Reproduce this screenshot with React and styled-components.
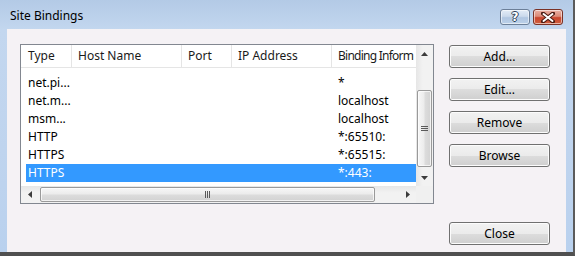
import React from "react";
import styled, { createGlobalStyle } from "styled-components";

const Global = createGlobalStyle`
  html, body { margin: 0; padding: 0; background: #ffffff; }
  body { font-family: "Noto Sans", "Open Sans", sans-serif; font-size: 12px; }
  * { box-sizing: border-box; }
`;

const Window = styled.div`
  width: 575px;
  height: 256px;
  display: flex;
  flex-direction: column;
  padding: 0 7px 0 7px;
  background: linear-gradient(180deg, #b3cae6 0%, #c3d7ef 12%, #bfd4ee 60%, #b9d1ee 100%);
  border-right: 2px solid #5b5b5b;
  border-bottom: 4px solid #505050;
`;

const TitleBar = styled.div`
  height: 29px;
  flex: none;
  display: flex;
  align-items: flex-start;
`;

const Title = styled.div`
  padding: 7px 0 0 3px;
  flex: 1;
  font-size: 12px;
  line-height: 17px;
  color: #000;
`;

const CaptionButtons = styled.div`
  display: flex;
  gap: 3px;
  margin: 9px 3px 0 0;
`;

const CaptionButton = styled.div`
  width: 30px;
  height: 16px;
  border: 1px solid ${(p) => (p.$danger ? "#7a3226" : "#6c7f98")};
  border-radius: 3px;
  display: flex;
  align-items: center;
  justify-content: center;
  background: ${(p) =>
    p.$danger
      ? "linear-gradient(180deg, #eab1a5 0%, #dc8b78 45%, #c9452d 55%, #d0603f 100%)"
      : "linear-gradient(180deg, #e3ecf7 0%, #cbdaec 45%, #b0c6e1 55%, #bcd1ea 100%)"};
  box-shadow: inset 0 0 0 1px rgba(255, 255, 255, 0.55);
`;

const HelpGlyph = styled.span`
  font-family: "DejaVu Sans", sans-serif;
  font-weight: bold;
  font-size: 12px;
  line-height: 12px;
  color: #ffffff;
  text-shadow: 1px 0 0 #2e3f57, -1px 0 0 #2e3f57, 0 1px 0 #2e3f57, 0 -1px 0 #2e3f57;
`;

const Client = styled.div`
  flex: 1;
  background: #f5f2f5;
  display: grid;
  grid-template-columns: 414px 101px;
  grid-template-rows: 160px auto;
  column-gap: 15px;
  padding: 15px 16px 7px 13px;
`;

const ListView = styled.div`
  border: 1px solid #828790;
  background: #ffffff;
  display: grid;
  grid-template-columns: 1fr 17px;
  grid-template-rows: 1fr 17px;
  overflow: hidden;
`;

const TableArea = styled.div`
  overflow: hidden;
  display: flex;
  flex-direction: column;
`;

const HeaderRow = styled.div`
  height: 23px;
  flex: none;
  display: flex;
  padding-left: 1px;
  border-bottom: 1px solid #e5e5e5;
  background: #ffffff;
`;

const HeaderCell = styled.div`
  width: ${(p) => (p.$w ? `${p.$w}px` : "auto")};
  flex: ${(p) => (p.$w ? "none" : "1")};
  padding-left: 6px;
  border-right: ${(p) => (p.$w ? "1px solid #e5e5e5" : "none")};
  line-height: 22px;
  white-space: nowrap;
  letter-spacing: ${(p) => (p.$w ? "0" : "-0.75px")};
  color: #1a1a1a;
`;

const Rows = styled.div`
  padding-top: 6px;
`;

const Row = styled.div`
  margin-left: 5px;
  height: 18px;
  display: flex;
  background: ${(p) => (p.$selected ? "#3399ff" : "transparent")};
  color: ${(p) => (p.$selected ? "#ffffff" : "#000000")};
`;

const Cell = styled.div`
  width: ${(p) => (p.$w ? `${p.$w}px` : "auto")};
  flex: ${(p) => (p.$w ? "none" : "1")};
  padding-left: ${(p) => (p.$first ? 2 : 6)}px;
  line-height: 18px;
  white-space: nowrap;
`;

const VScroll = styled.div`
  display: flex;
  flex-direction: column;
  background: linear-gradient(90deg, #e6e6e6 0%, #f2f2f2 40%, #f2f2f2 100%);
`;

const HScroll = styled.div`
  display: flex;
  background: linear-gradient(180deg, #e6e6e6 0%, #f2f2f2 40%, #f2f2f2 100%);
`;

const ArrowBox = styled.div`
  width: 17px;
  height: 17px;
  flex: none;
  display: flex;
  align-items: center;
  justify-content: center;
`;

const Track = styled.div`
  flex: 1;
  display: flex;
  flex-direction: ${(p) => (p.$vertical ? "column" : "row")};
`;

const Thumb = styled.div`
  flex: none;
  border: 1px solid #9a9a9a;
  border-radius: 2px;
  display: flex;
  align-items: center;
  justify-content: center;
  background: ${(p) =>
    p.$vertical
      ? "linear-gradient(90deg, #f7f7f7 0%, #ececec 45%, #dcdcdc 55%, #d2d2d2 100%)"
      : "linear-gradient(180deg, #f7f7f7 0%, #ececec 45%, #dcdcdc 55%, #d2d2d2 100%)"};
  box-shadow: inset 0 0 0 1px rgba(255, 255, 255, 0.7);
`;

const Corner = styled.div`
  background: #f0f0f0;
`;

const ButtonColumn = styled.div`
  display: flex;
  flex-direction: column;
  gap: 10px;
  padding-top: 1px;
`;

const Button = styled.div`
  height: 23px;
  border: 1px solid #707070;
  border-radius: 3px;
  background: linear-gradient(180deg, #f2f2f2 0%, #ebebeb 50%, #dddddd 50%, #cfcfcf 100%);
  box-shadow: inset 0 0 0 1px #fcfcfc;
  display: flex;
  align-items: center;
  justify-content: center;
  font-size: 12px;
  line-height: 16px;
  color: #000;
`;

const CloseRow = styled.div`
  grid-column: 2;
  grid-row: 2;
  margin-top: 18px;
`;

const Tri = ({ dir }) => {
  const pts = {
    up: "0,4 7,4 3.5,0",
    down: "0,0 7,0 3.5,4",
    left: "4,0 4,7 0,3.5",
    right: "0,0 0,7 4,3.5",
  }[dir];
  const vertical = dir === "up" || dir === "down";
  return (
    <svg width={vertical ? 7 : 4} height={vertical ? 4 : 7} viewBox={vertical ? "0 0 7 4" : "0 0 4 7"}>
      <polygon points={pts} fill="#3c3c3c" />
    </svg>
  );
};

const Grip = ({ vertical }) => (
  <svg width="7" height="7" viewBox="0 0 7 7">
    {vertical
      ? [1, 3, 5].map((y) => <line key={y} x1="0" x2="7" y1={y + 0.5} y2={y + 0.5} stroke="#5a5a5a" strokeWidth="1" />)
      : [1, 3, 5].map((x) => <line key={x} y1="0" y2="7" x1={x + 0.5} x2={x + 0.5} stroke="#5a5a5a" strokeWidth="1" />)}
  </svg>
);

const CloseX = () => (
  <svg width="14" height="11" viewBox="0 0 14 11">
    <path d="M2 1.5 L12 9.5 M12 1.5 L2 9.5" stroke="#4a1a12" strokeWidth="4" strokeLinecap="round" />
    <path d="M2.5 2 L11.5 9 M11.5 2 L2.5 9" stroke="#ffffff" strokeWidth="2" strokeLinecap="round" />
  </svg>
);

const columns = [
  { label: "Type", w: 50 },
  { label: "Host Name", w: 110 },
  { label: "Port", w: 50 },
  { label: "IP Address", w: 100 },
  { label: "Binding Inform" },
];

const bindings = [
  { type: "net.pi...", info: "*" },
  { type: "net.m...", info: "localhost" },
  { type: "msm...", info: "localhost" },
  { type: "HTTP", info: "*:65510:" },
  { type: "HTTPS", info: "*:65515:" },
  { type: "HTTPS", info: "*:443:", selected: true },
];

export default function App() {
  return (
    <>
      <Global />
      <Window>
        <TitleBar>
          <Title>Site Bindings</Title>
          <CaptionButtons>
            <CaptionButton>
              <HelpGlyph>?</HelpGlyph>
            </CaptionButton>
            <CaptionButton $danger>
              <CloseX />
            </CaptionButton>
          </CaptionButtons>
        </TitleBar>
        <Client>
          <ListView>
            <TableArea>
              <HeaderRow>
                {columns.map((c) => (
                  <HeaderCell key={c.label} $w={c.w}>
                    {c.label}
                  </HeaderCell>
                ))}
              </HeaderRow>
              <Rows>
                {bindings.map((b, i) => (
                  <Row key={i} $selected={b.selected}>
                    <Cell $w={46} $first>
                      {b.type}
                    </Cell>
                    <Cell $w={110} />
                    <Cell $w={50} />
                    <Cell $w={100} />
                    <Cell>{b.info}</Cell>
                  </Row>
                ))}
              </Rows>
            </TableArea>
            <VScroll>
              <ArrowBox>
                <Tri dir="up" />
              </ArrowBox>
              <Track $vertical>
                <Thumb $vertical style={{ marginTop: 28, height: 77, marginLeft: 1, marginRight: 1 }}>
                  <Grip vertical />
                </Thumb>
              </Track>
              <ArrowBox>
                <Tri dir="down" />
              </ArrowBox>
            </VScroll>
            <HScroll>
              <ArrowBox>
                <Tri dir="left" />
              </ArrowBox>
              <Track>
                <Thumb style={{ marginLeft: 2, width: 335, marginTop: 1, marginBottom: 1 }}>
                  <Grip />
                </Thumb>
              </Track>
              <ArrowBox>
                <Tri dir="right" />
              </ArrowBox>
            </HScroll>
            <Corner />
          </ListView>
          <ButtonColumn>
            <Button>Add...</Button>
            <Button>Edit...</Button>
            <Button>Remove</Button>
            <Button>Browse</Button>
          </ButtonColumn>
          <CloseRow>
            <Button>Close</Button>
          </CloseRow>
        </Client>
      </Window>
    </>
  );
}
